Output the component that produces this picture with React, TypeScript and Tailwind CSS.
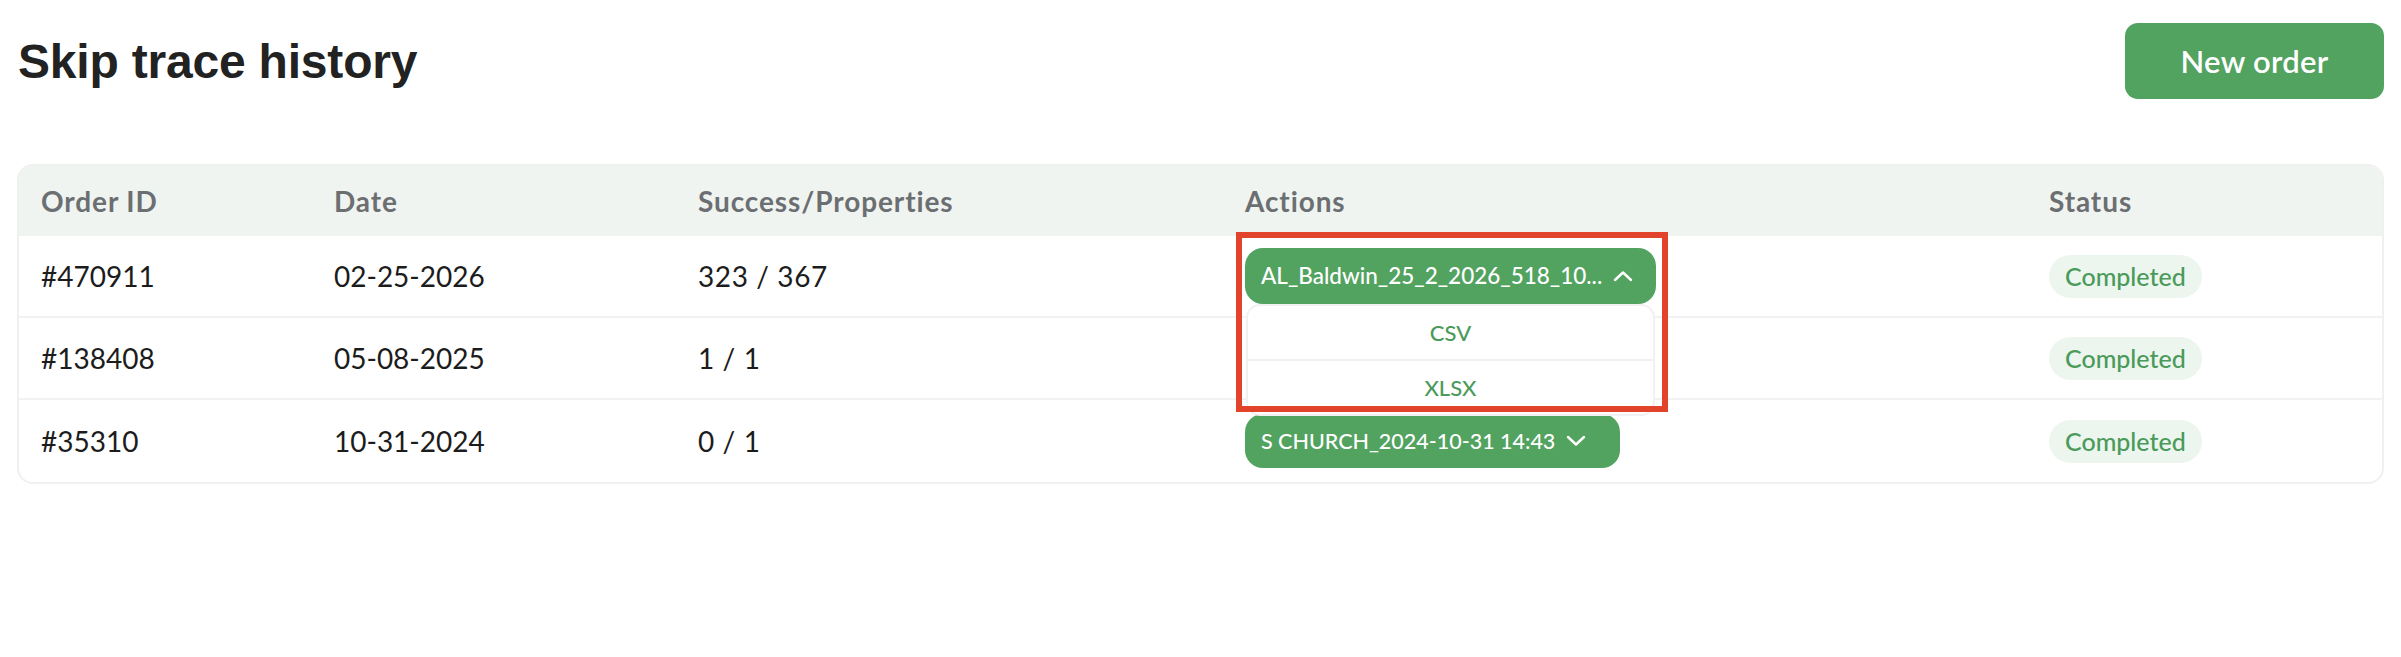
import React from "react";

const rows = [
  { id: "#470911", date: "02-25-2026", sp: "323 / 367", file: "AL_Baldwin_25_2_2026_518_10...", open: true },
  { id: "#138408", date: "05-08-2025", sp: "1 / 1", file: null, open: false },
  { id: "#35310", date: "10-31-2024", sp: "0 / 1", file: "S CHURCH_2024-10-31 14:43", open: false },
];

function Chevron({ up }: { up: boolean }) {
  return (
    <svg width="20" height="12" viewBox="0 0 20 12" fill="none" className="shrink-0">
      <path
        d={up ? "M2 10 L10 2.5 L18 10" : "M2 2 L10 9.5 L18 2"}
        stroke="white"
        strokeWidth="2.4"
        strokeLinecap="round"
        strokeLinejoin="round"
      />
    </svg>
  );
}

export default function App() {
  return (
    <div className="min-h-[657px] w-full bg-white font-['Lato',sans-serif] text-[#1c1c1c]">
      <div className="flex items-center justify-between pl-[18px] pr-[17px] pt-[23px]">
        <h1 className="pt-[2px] font-['Liberation_Sans',sans-serif] text-[48px] font-bold leading-none tracking-[-0.2px] text-[#222222]">
          Skip trace history
        </h1>
        <button className="flex h-[76px] w-[259px] items-center justify-center rounded-[13px] bg-[#52a260] text-[31px] font-semibold tracking-[0.3px] text-white">
          New order
        </button>
      </div>

      <div className="mx-[17px] mt-[65px] rounded-[16px] border-2 border-[#eff1ef]">
        <div className="grid h-[70px] grid-cols-[293px_364px_547px_804px_1fr] items-center rounded-t-[14px] bg-[#f0f4f1] pl-[22px] text-[28px] font-bold tracking-[0.9px] text-[#6b6f71]">
          <div>Order ID</div>
          <div>Date</div>
          <div>Success/Properties</div>
          <div>Actions</div>
          <div>Status</div>
        </div>
        {rows.map((r, i) => (
          <div
            key={r.id}
            className={`grid h-[82px] grid-cols-[293px_364px_547px_804px_1fr] items-center pl-[22px] text-[28px] ${
              i < rows.length - 1 ? "border-b-2 border-[#f1f2f1]" : ""
            }`}
          >
            <div>{r.id}</div>
            <div>{r.date}</div>
            <div className="tracking-[0.6px]">{r.sp}</div>
            <div>
              {r.file && (
                <div className="relative inline-block">
                  <button
                    className={`flex items-center gap-[11px] rounded-[18px] bg-[#52a260] pl-[16px] pr-[34px] font-medium text-white ${
                      r.open ? "h-[56px] w-[411px] text-[22.5px]" : "h-[54px] text-[21.5px]"
                    }`}
                  >
                    <span className="whitespace-nowrap">{r.file}</span>
                    <Chevron up={r.open} />
                  </button>
                  {r.open && (
                    <>
                      <div className="absolute left-[1px] top-[56px] z-10 w-[409px] overflow-hidden rounded-[14px] border-2 border-[#f0f1f0] bg-white text-[22px] font-medium text-[#4a9a5a]">
                        <div className="flex h-[55px] items-center justify-center border-b-2 border-[#f0f1f0]">CSV</div>
                        <div className="flex h-[53px] items-center justify-center">XLSX</div>
                      </div>
                      <div className="pointer-events-none absolute left-[-9px] top-[-16px] z-20 h-[180px] w-[432px] border-[6px] border-[#e2432b]" />
                    </>
                  )}
                </div>
              )}
            </div>
            <div>
              <span className="inline-flex h-[43px] items-center rounded-full bg-[#ecf5ee] px-[16px] text-[25px] font-medium text-[#4a9a5a]">
                Completed
              </span>
            </div>
          </div>
        ))}
      </div>
    </div>
  );
}
